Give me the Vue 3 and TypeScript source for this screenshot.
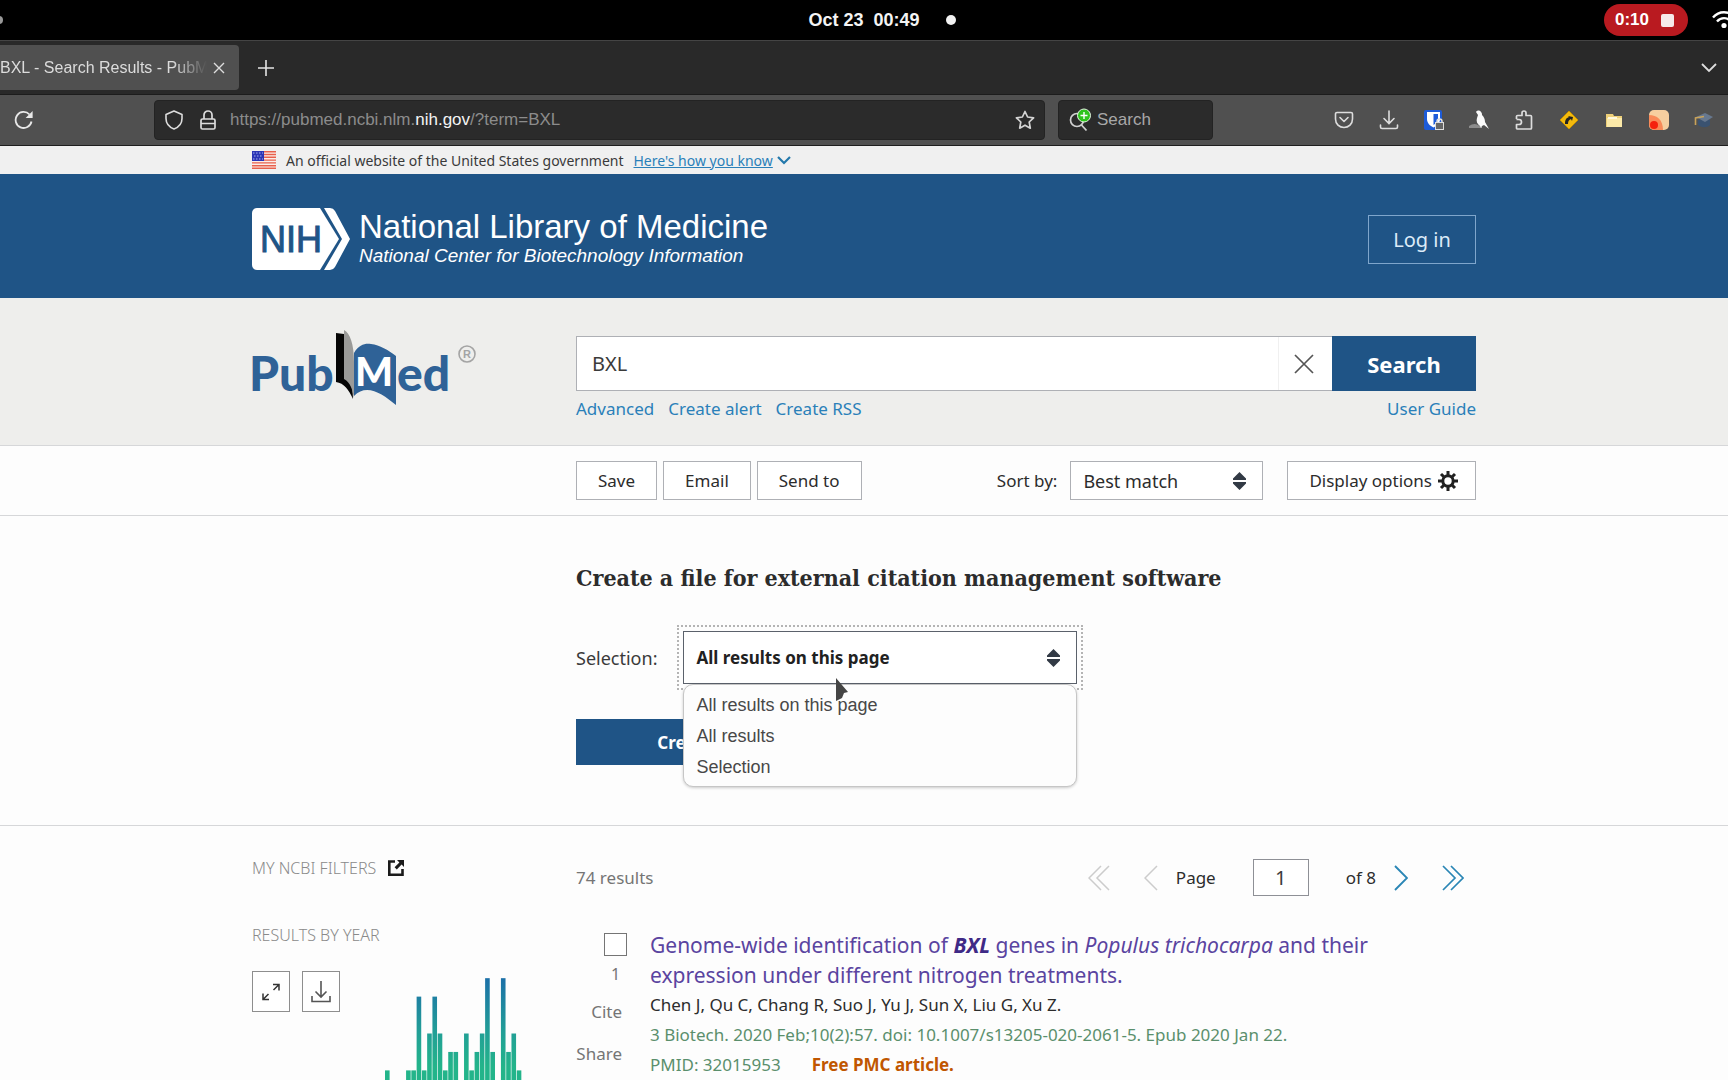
<script setup lang="ts">
import { ref } from 'vue'

const selection = ref('All results on this page')
const choices: string[] = ['All results on this page', 'All results', 'Selection']
const sortBy = ref('Best match')
const term = ref('BXL')
const pageNumber = ref('1')

// Number of results for each year, oldest first
const years: number[] = [1, 0, 0, 0, 1, 1, 5, 1, 3, 5, 3, 1, 2, 2, 0, 3, 1, 2, 3, 6, 2, 0, 6, 2, 3, 1]
const unit = 56
const pitch = 16
const chartHeight = 6 * unit
</script>

<template>
  <div class="screen">
    <header class="system">
      <span class="workspace"></span>
      <div class="clock">
        <time>Oct 23&nbsp; 00:49</time>
        <span class="notice"></span>
      </div>
      <div class="tray">
        <button class="recording" type="button" aria-label="Stop recording">0:10<span class="stop"></span></button>
        <svg class="wifi" viewBox="0 0 24 18" width="24" height="18" fill="none" stroke="#fff" stroke-width="2.4">
          <path d="M1 6.5C7-.5 17-.5 23 6.5M5 10.500c4-4.500 10-4.500 14 0" />
          <circle cx="12" cy="14.500" r="2.600" fill="#fff" stroke="none" />
        </svg>
      </div>
    </header>

    <div class="tabs">
      <div class="tab">
        <span class="tab-title">BXL - Search Results - PubMed</span>
        <button class="plain" type="button" aria-label="Close tab">
          <svg viewBox="0 0 12 12" width="12" height="12" fill="none" stroke="#ddd" stroke-width="1.400"><path d="M1 1l10 10M11 1L1 11" /></svg>
        </button>
      </div>
      <button class="plain new-tab" type="button" aria-label="New tab">
        <svg viewBox="0 0 16 16" width="16" height="16" fill="none" stroke="#e4e4e4" stroke-width="1.600"><path d="M8 0v16M0 8h16" /></svg>
      </button>
      <button class="plain all-tabs" type="button" aria-label="List all tabs">
        <svg viewBox="0 0 16 10" width="16" height="10" fill="none" stroke="#ddd" stroke-width="1.800"><path d="M1 1l7 7 7-7" /></svg>
      </button>
    </div>

    <div class="toolbar">
      <button class="plain reload" type="button" aria-label="Reload">
        <svg viewBox="0 0 20 20" width="20" height="20" fill="none" stroke="#e8e8e8" stroke-width="1.800">
          <path d="M17.500 11.500A8 8 0 1 1 15.500 4.500" />
          <path d="M18.600 1v7h-7z" fill="#e8e8e8" stroke="none" />
        </svg>
      </button>
      <div class="address">
        <svg viewBox="0 0 20 20" width="20" height="20" fill="none" stroke="#ddd" stroke-width="1.600" stroke-linejoin="round">
          <path d="M10 1l8 3.500v4c0 5-3.200 8.600-8 10.500-4.800-1.900-8-5.500-8-10.500v-4z" />
        </svg>
        <svg class="lock" viewBox="0 0 16 20" width="16" height="20" fill="none" stroke="#ddd" stroke-width="1.700">
          <rect x="1" y="9" width="14" height="10" rx="1.500" />
          <path d="M4 9V5a4 4 0 0 1 8 0v4M1 13.500h14" />
        </svg>
        <a class="url" href="#">https://pubmed.ncbi.nlm.<b>nih.gov</b>/?term=BXL</a>
        <svg viewBox="0 0 20 20" width="20" height="20" fill="none" stroke="#d4d4d4" stroke-width="1.700" stroke-linejoin="round">
          <path d="M10 1.500l2.600 5.500 6 .800-4.400 4.200 1.100 6.200L10 15.200l-5.300 3 1.100-6.200L1.400 7.800l6-.800z" />
        </svg>
      </div>
      <label class="quick">
        <svg viewBox="0 0 22 24" width="22" height="24" fill="none">
          <circle cx="8" cy="12" r="6.500" stroke="#d0d0d0" stroke-width="1.700" />
          <path d="M12.500 17l5 5.500" stroke="#d0d0d0" stroke-width="1.800" />
          <circle cx="15" cy="7.500" r="6.500" fill="#2ec41c" stroke="#e6f5e4" />
          <path d="M15 4v7M11.500 7.500h7" stroke="#fff" stroke-width="1.400" />
        </svg>
        <input type="text" placeholder="Search" aria-label="Search the web" />
      </label>
      <div class="extensions">
        <button class="plain" type="button" aria-label="Pocket">
          <svg viewBox="0 0 20 20" width="20" height="20" fill="none" stroke="#ddd" stroke-width="1.600" stroke-linejoin="round" stroke-linecap="round">
            <path d="M3 2.500h14a1.500 1.500 0 0 1 1.500 1.500v5c0 5-3.800 8.500-8.500 8.500S1.500 14 1.500 9V4A1.500 1.500 0 0 1 3 2.500z" /><path d="M6 7.500l4 4 4-4" />
          </svg>
        </button>
        <button class="plain" type="button" aria-label="Downloads">
          <svg viewBox="0 0 20 20" width="20" height="20" fill="none" stroke="#ddd" stroke-width="1.600" stroke-linecap="round">
            <path d="M10 1v12M5 8.500l5 5 5-5M1.500 15v2a1.500 1.500 0 0 0 1.500 1.500h14a1.500 1.500 0 0 0 1.500-1.500v-2" />
          </svg>
        </button>
        <button class="plain" type="button" aria-label="Password vault">
          <svg viewBox="0 0 20 20" width="20" height="20">
            <rect width="18" height="20" rx="2" fill="#1d5bd8" />
            <path d="M3 2h13v7c0 4-3 7-6.500 8.500C6 16 3 13 3 9z" fill="#fff" />
            <path d="M9.500 4H14v5c0 2.500-2 4.500-4.500 6z" fill="#1d5bd8" />
            <path d="M11 12h9v8h-9z" fill="#ddd" /><path d="M12 13h7v6h-7z" fill="#666" />
            <path d="M13 12.500v-1a2.500 2.500 0 0 1 5 0v1" fill="none" stroke="#ddd" stroke-width="1.500" />
          </svg>
        </button>
        <button class="plain" type="button" aria-label="Bird">
          <svg viewBox="0 0 20 20" width="20" height="20">
            <path d="M0 16c3-2 6-3 9-1l4 2v1H0z" fill="#8c8c8c" />
            <path d="M7 2c1-2 4-2 5 0 1 1 1 2 1 3 2 2 3 4 3 7l4 7-5-4-2 1-1 2-1-2c-3-2-4-5-3-8l1-3z" fill="#fafafa" />
          </svg>
        </button>
        <button class="plain" type="button" aria-label="Extensions">
          <svg viewBox="0 0 20 20" width="20" height="20" fill="none" stroke="#ddd" stroke-width="1.700" stroke-linejoin="round">
            <path d="M2.500 9V6.500a1 1 0 0 1 1-1H8V3a2 2 0 0 1 4 0v2.500h4.500a1 1 0 0 1 1 1V18a1 1 0 0 1-1 1h-13a1 1 0 0 1-1-1v-3.500H5a2.300 2.300 0 0 0 0-5H2.500" />
          </svg>
        </button>
        <button class="plain" type="button" aria-label="Redirector">
          <svg viewBox="0 0 20 20" width="20" height="20">
            <path d="M10 1l9 9-9 9-9-9z" fill="#f2b90d" stroke="#c79100" stroke-linejoin="round" />
            <path d="M6 14c0-4 1-6 4-7l-1-1 5 1-1 4-1-2c-2 1-3 2-3 5z" fill="#222" />
          </svg>
        </button>
        <button class="plain" type="button" aria-label="Folder">
          <svg viewBox="0 0 20 20" width="20" height="20">
            <path d="M2 4h7l1 2h8v11H2z" fill="#edcf78" /><path d="M3 8h15v9H3z" fill="#fbe9a8" /><path d="M4 7h9v2H4z" fill="#fff8dc" />
          </svg>
        </button>
        <button class="plain" type="button" aria-label="Colour layers">
          <svg viewBox="0 0 20 20" width="20" height="20">
            <rect width="20" height="20" rx="5" fill="#f7cf9f" />
            <path d="M0 5c8 0 14 5 14 15H5a5 5 0 0 1-5-5z" fill="#f98a58" />
            <circle cx="5" cy="15" r="4" fill="#f5210d" />
          </svg>
        </button>
        <button class="plain" type="button" aria-label="Scholar">
          <svg viewBox="0 0 20 20" width="20" height="20">
            <path d="M4 10v5c4 3 9 3 12 0v-5z" fill="#3a5270" /><path d="M2 7l9-4 8 4-8 5z" fill="#67788f" /><path d="M10 6.500L1.500 8v7" fill="none" stroke="#c9a35a" stroke-width="1.600" />
          </svg>
        </button>
      </div>
    </div>

    <main class="page">
      <div class="official">
        <div class="wrap official-row">
          <svg viewBox="0 0 24 18" width="24" height="18">
            <path fill="#fbeeea" d="M0 0h24v18H0z" />
            <path stroke="#e8604c" stroke-width="1.400" d="M0 .7h24M0 3.500h24M0 6.300h24M0 9.100h24M0 11.900h24M0 14.700h24M0 17.300h24" />
            <path fill="#2b35b5" d="M0 0h12v10H0z" />
            <path stroke="#aab4ee" stroke-width="1.200" stroke-dasharray="1.500 1.500" d="M1 2h10M2 5h9M1 8h10" />
          </svg>
          <span>An official website of the United States government</span>
          <a class="know" href="#">Here's how you know
            <svg viewBox="0 0 14 9" width="14" height="9" fill="none" stroke="#2378ab" stroke-width="2.200"><path d="M1 1l6 6 6-6" /></svg></a>
        </div>
      </div>

      <div class="masthead">
        <div class="wrap masthead-row">
          <a class="nlm" href="#">
            <svg viewBox="0 0 98 62" width="98" height="62">
              <path fill="#fff" d="M5 0h63l19 31-19 31H5a5 5 0 0 1-5-5V5a5 5 0 0 1 5-5z" />
              <path fill="#fff" d="M72 0h6a6 6 0 0 1 5 3l15 28-15 28a6 6 0 0 1-5 3h-6l18-31z" />
              <text x="8" y="44" class="nih">NIH</text>
            </svg>
            <span class="nlm-names">
              <span class="nlm-title">National Library of Medicine</span>
              <em>National Center for Biotechnology Information</em>
            </span>
          </a>
          <button class="login" type="button">Log in</button>
        </div>
      </div>

      <form class="search-band" @submit.prevent>
        <div class="wrap columns">
          <a class="side" href="#" aria-label="PubMed">
            <svg class="pubmed" viewBox="-4 0 234 80" width="234" height="80">
              <text x="-3" y="61" class="word">Pub</text>
              <path fill="#050505" d="M84 3l8 1 8 46 1 19c-4-9-9-16-17-17z" />
              <path fill="#9a9a98" d="M92 0c6 3 10 14 10 32v36c-2-9-3-15-10-19z" />
              <path fill="#2f6297" d="M102 23c5-9 12-10 17-9 9 1 17 6 25 12v49c-14-12-30-22-42-9z" />
              <text x="103" y="56" class="initial">M</text>
              <text x="145" y="61" class="word">ed</text>
              <circle cx="215" cy="24" r="8" fill="none" stroke="#a4a4a4" stroke-width="1.600" />
              <text x="215" y="28" text-anchor="middle" class="reg">R</text>
            </svg>
          </a>
          <div class="content">
            <div class="search-row">
              <div class="field">
                <input v-model="term" class="term" type="text" aria-label="Search term" />
                <button class="plain clear" type="button" aria-label="Clear search">
                  <svg viewBox="0 0 20 20" width="20" height="20" fill="none" stroke="#555" stroke-width="1.700"><path d="M1 1l18 18M19 1L1 19" /></svg>
                </button>
              </div>
              <button class="go" type="submit">Search</button>
            </div>
            <nav class="links">
              <a href="#">Advanced</a><a href="#">Create alert</a><a href="#">Create RSS</a><a class="guide" href="#">User Guide</a>
            </nav>
          </div>
        </div>
      </form>

      <div class="actions">
        <div class="wrap columns">
          <div class="side"></div>
          <div class="content actions-row">
            <button class="box" type="button">Save</button>
            <button class="box" type="button">Email</button>
            <button class="box" type="button">Send to</button>
            <label class="sort-label" for="sort">Sort by:</label>
            <span class="picker sort">
              <select id="sort" v-model="sortBy"><option>Best match</option></select>
              <svg viewBox="0 0 13 18" width="13" height="18" fill="#323a45"><path d="M6.500 0L13 6.500V8H0V6.500zM0 10h13v1.500L6.500 18 0 11.500z" /></svg>
            </span>
            <button class="box display" type="button">Display options
              <svg viewBox="0 0 20 20" width="20" height="20" fill="none" stroke="#212121">
                <circle cx="10" cy="10" r="5.200" stroke-width="3" />
                <path stroke-width="3" d="M10 0v4M10 16v4M0 10h4M16 10h4M3 3l2.800 2.800M14.200 14.200L17 17M3 17l2.800-2.800M14.200 5.800L17 3" />
              </svg>
            </button>
          </div>
        </div>
      </div>

      <form class="export" @submit.prevent>
        <div class="wrap columns">
          <div class="side"></div>
          <div class="content">
            <h2>Create a file for external citation management software</h2>
            <div class="choose">
              <label for="selection">Selection:</label>
              <span class="picker chosen">
                <select id="selection" v-model="selection">
                  <option v-for="c in choices" :key="c">{{ c }}</option>
                </select>
                <svg viewBox="0 0 13 18" width="13" height="18" fill="#323a45"><path d="M6.500 0L13 6.500V8H0V6.500zM0 10h13v1.500L6.500 18 0 11.500z" /></svg>
                <ul class="menu" role="listbox">
                  <li v-for="c in choices" :key="c" role="option">{{ c }}</li>
                </ul>
                <svg class="pointer" viewBox="0 0 14 25" width="14" height="25"><path fill="#454545" d="M1 0l12 14-4 1-2 5-6 3z" /></svg>
              </span>
            </div>
            <button class="create" type="submit">Create file</button>
          </div>
        </div>
      </form>

      <section class="wrap columns results">
        <aside class="side">
          <h3>MY NCBI FILTERS
            <svg viewBox="0 0 16 16" width="16" height="16" fill="none" stroke="#1b1b1b"><path stroke-width="2.600" d="M7 1.500H1.300v13.200h13.200V9" /><path d="M9 0h7v7l-2.400-2.400-4.800 4.800-2.200-2.200 4.800-4.800z" fill="#1b1b1b" stroke="none" /></svg>
          </h3>
          <h3 class="by-year">RESULTS BY YEAR</h3>
          <div class="timeline">
            <button class="tool" type="button" aria-label="Expand chart">
              <svg viewBox="0 0 18 18" width="18" height="18" fill="none" stroke="#333" stroke-width="1.500"><path d="M11 1.500h6v6M17 1.500l-5.500 5.500M1 10.500v6h6M1 16.500l5.500-5.500" /></svg>
            </button>
            <button class="tool" type="button" aria-label="Download chart">
              <svg viewBox="0 0 20 22" width="20" height="22" fill="none" stroke="#555" stroke-width="1.600"><path d="M10 0v16M4.500 10.500L10 16l5.500-5.500M1 15v5.500h18V15" /></svg>
            </button>
            <svg class="chart" :viewBox="`0 0 ${years.length * pitch} ${chartHeight}`" width="137" height="111">
              <defs>
                <linearGradient id="depth" gradientUnits="userSpaceOnUse" x1="0" y1="0" x2="0" :y2="chartHeight">
                  <stop offset="0" stop-color="#1c70a8" /><stop offset="0.500" stop-color="#22a096" /><stop offset="0.800" stop-color="#23b48a" />
                </linearGradient>
              </defs>
              <rect v-for="(n, i) in years" :key="i" :x="i * pitch" :y="chartHeight - n * unit" width="14" :height="n * unit" fill="url(#depth)" />
            </svg>
          </div>
        </aside>

        <div class="content">
          <div class="pager">
            <span class="count">74 results</span>
            <button class="plain first" type="button" aria-label="First page"><svg viewBox="0 0 22 26" width="22" height="26" fill="none" stroke="#ccc" stroke-width="1.500"><path d="M13 1L1 13l12 12M21 1L9 13l12 12" /></svg></button>
            <button class="plain previous" type="button" aria-label="Previous page"><svg viewBox="0 0 14 26" width="14" height="26" fill="none" stroke="#ccc" stroke-width="1.500"><path d="M13 1L1 13l12 12" /></svg></button>
            <label for="page">Page</label>
            <input id="page" v-model="pageNumber" class="page-number" type="text" />
            <span class="total">of 8</span>
            <button class="plain next" type="button" aria-label="Next page"><svg viewBox="0 0 14 26" width="14" height="26" fill="none" stroke="#2a86b5" stroke-width="1.900"><path d="M1 1l12 12L1 25" /></svg></button>
            <button class="plain last" type="button" aria-label="Last page"><svg viewBox="0 0 22 26" width="22" height="26" fill="none" stroke="#2a86b5" stroke-width="1.700"><path d="M1 1l12 12L1 25M9 1l12 12L9 25" /></svg></button>
          </div>
          <article class="hit">
            <div class="tools">
              <label class="pick"><input type="checkbox" /><span>1</span></label>
              <button class="plain tool-link" type="button">Cite</button>
              <button class="plain tool-link" type="button">Share</button>
            </div>
            <div class="record">
              <a class="title" href="#">Genome-wide identification of <b><i>BXL</i></b> genes in <i>Populus trichocarpa</i> and their expression under different nitrogen treatments.</a>
              <p>Chen J, Qu C, Chang R, Suo J, Yu J, Sun X, Liu G, Xu Z.</p>
              <p class="journal">3 Biotech. 2020 Feb;10(2):57. doi: 10.1007/s13205-020-2061-5. Epub 2020 Jan 22.</p>
              <p class="journal">PMID: 32015953<strong>Free PMC article.</strong></p>
            </div>
          </article>
        </div>
      </section>
    </main>
  </div>
</template>

<style>
body {
  background: #fdfdfd;
}
</style>

<style scoped>
.screen {
  height: 100vh;
  overflow: hidden;
  display: flex;
  flex-direction: column;
  font-family: "Liberation Sans", Arial, sans-serif;
  font-size: 17px;
  color: #2c2c2c;
}
.screen * { box-sizing: border-box; }
svg { flex: none; display: block; }
button, input, select { font: inherit; color: inherit; margin: 0; border-radius: 0; }
button { cursor: pointer; white-space: nowrap; }
a { text-decoration: none; color: #2a80b9; }
.plain { border: 0; padding: 0; background: none; display: flex; align-items: center; justify-content: center; }

/* Desktop bar */
.system {
  flex: none;
  height: 40px;
  background: #000;
  color: #f4f4f4;
  display: grid;
  grid-template-columns: 1fr auto 1fr;
  align-items: center;
  font-weight: 700;
}
.workspace { width: 8px; height: 8px; margin-left: -5px; border-radius: 50%; background: #999; }
.clock { position: relative; font-size: 18px; }
.notice { position: absolute; right: -36px; top: 5px; width: 10px; height: 10px; border-radius: 50%; background: #f2f2f2; }
.tray { display: flex; justify-content: flex-end; align-items: center; gap: 24px; margin-right: -8px; }
.recording {
  display: flex;
  align-items: center;
  gap: 12px;
  height: 32px;
  padding: 0 14px 0 11px;
  border: 0;
  border-radius: 16px;
  background: #b91a20;
  color: #fff;
}
.stop { width: 13px; height: 13px; border-radius: 2px; background: #f6eaea; }

/* Browser */
.tabs {
  flex: none;
  height: 55px;
  padding-right: 11px;
  display: flex;
  align-items: center;
  background: #292929;
  border-top: 1px solid #444;
  border-bottom: 1px solid #1c1c1c;
}
.tab {
  width: 239px;
  height: 45px;
  padding-right: 14px;
  display: flex;
  align-items: center;
  background: #505050;
  color: #dcdcdc;
  border-radius: 0 4px 4px 0;
  font-size: 16px;
}
.tab-title {
  flex: 1;
  margin-right: 6px;
  overflow: hidden;
  white-space: nowrap;
  mask-image: linear-gradient(to left, transparent, #000 34px);
}
.new-tab { margin-left: 19px; }
.all-tabs { margin-left: auto; }
.toolbar {
  flex: none;
  height: 51px;
  padding: 0 2px 0 14px;
  display: flex;
  align-items: center;
  background: #505050;
  border-bottom: 1px solid #1e1e1e;
}
.reload { margin-right: 120px; }
.address, .quick {
  height: 40px;
  display: flex;
  align-items: center;
  background: #2b2b2b;
  border: 1px solid #232323;
  border-radius: 4px;
}
.address { flex: 1; padding: 0 9px; }
.lock { margin: 0 14px 0 16px; }
.url { flex: 1; color: #8c8c8c; }
.url b { font-weight: 400; color: #f4f4f4; }
.quick { width: 155px; margin: 0 108px 0 13px; padding: 0 10px; gap: 6px; }
.quick input { width: 100px; min-width: 0; padding: 0; border: 0; background: none; outline: 0; }
.quick input::placeholder { color: #a8a8a8; opacity: 1; }
.extensions { display: flex; }
.extensions button { width: 45px; height: 40px; }

/* Page */
.page {
  flex: 1;
  min-height: 0;
  overflow: hidden;
  background: #fdfdfd;
  font-family: "Noto Sans", "Open Sans", sans-serif;
}
.wrap { width: 1224px; max-width: 100%; margin: 0 auto; }
.columns { display: flex; }
.side { flex: none; width: 324px; }
.content { flex: 1; min-width: 0; }

.official { background: #f0f0f0; font-size: 14px; color: #3a3a3a; }
.official-row { display: flex; align-items: center; height: 28px; }
.official-row > span { margin: 0 10px; }
.know { display: flex; align-items: center; text-decoration: underline; gap: 4px; }

.masthead { background: #1f5486; }
.masthead-row { display: flex; align-items: center; justify-content: space-between; height: 124px; padding-top: 6px; }
.nlm { display: flex; align-items: center; gap: 9px; color: #fff; font-family: "Liberation Sans", Arial, sans-serif; }
.nih { font: 400 36px "Liberation Sans", Arial, sans-serif; fill: #1f5486; stroke: #1f5486; }
.nlm-names { display: flex; flex-direction: column; font-size: 19px; line-height: 24px; }
.nlm-title { font-size: 33px; line-height: 34px; }
.login { width: 108px; height: 49px; background: none; border: 1px solid #7fa6cc; color: #dcebf8; font-size: 20px; }

.search-band { background: #eeeeec; border-bottom: 1px solid #d6d7d9; height: 148px; padding-top: 32px; }
.pubmed { margin-left: -4px; }
.word { font: 900 48px Lato, sans-serif; fill: #2f6297; }
.initial { font: 900 40px Lato, sans-serif; fill: #fff; }
.reg { font: 700 11px "Liberation Sans", Arial, sans-serif; fill: #a4a4a4; }
.search-row { display: flex; height: 55px; margin-top: 6px; }
.field { flex: 1; display: flex; background: #fff; border: 1px solid #aeb0b5; border-right: 0; }
.term { flex: 1; min-width: 0; border: 0; background: none; outline: 0; padding: 0 15px; font-size: 20px; color: #3a3a3a; }
.clear { width: 54px; padding-right: 4px; border-left: 1px solid #f0f0f0; }
.go { width: 144px; border: 0; background: #1f5486; color: #fff; font-size: 22px; font-weight: 700; }
.links { display: flex; gap: 14px; margin-top: 6px; line-height: 24px; }
.guide { margin-left: auto; }

.actions { border-bottom: 1px solid #d6d7d9; padding: 15px 0; }
.actions-row { display: flex; align-items: center; gap: 6px; }
.box { height: 39px; padding: 0 21px; background: #fff; border: 1px solid #aeb0b5; }
.sort-label { margin-left: auto; margin-right: 7px; }
.picker { position: relative; display: flex; align-items: center; }
.picker select { appearance: none; width: 100%; height: 100%; background: #fff; border: 1px solid #aeb0b5; padding: 0 12px; outline: 0; }
.picker > svg:not(.pointer) { position: absolute; right: 17px; pointer-events: none; }
.sort { width: 193px; height: 39px; margin-right: 18px; font-size: 18px; }
.display { display: flex; align-items: center; gap: 6px; padding: 0 17px 0 21px; }

.export { height: 310px; padding-top: 46px; border-bottom: 1px solid #d6d7d9; }
h2 { margin: 0; font: 700 23px/32px "DejaVu Serif Condensed", "DejaVu Serif", serif; }
.choose { display: flex; align-items: center; gap: 26px; margin-top: 37px; font-size: 18px; color: #3a3a3a; }
.chosen { width: 394px; height: 53px; font-size: 17px; color: #212121; }
.chosen select { border-color: #5b616b; font-weight: 700; outline: 2px dotted #b4b4b4; outline-offset: 4px; }
.menu {
  position: absolute;
  z-index: 1;
  top: 53px;
  left: 0;
  right: 0;
  margin: 0;
  padding: 5px 0 3px;
  list-style: none;
  background: #fdfdfd;
  border: 1px solid #c6c6c6;
  border-radius: 10px;
  box-shadow: 0 1px 3px #0003;
  font: 18px/31px "Liberation Sans", Arial, sans-serif;
  color: #484848;
}
.menu li { padding: 0 12px; }
.pointer { position: absolute; z-index: 2; left: 152px; top: 47px; }
.create { width: 250px; height: 46px; margin-top: 35px; border: 0; background: #1f5486; color: #fff; font-weight: 700; }

.results { padding-top: 30px; }
h3 { margin: 0; display: flex; align-items: center; gap: 12px; font-size: 16px; line-height: 24px; font-weight: 300; color: #8a8a8a; }
.by-year { margin-top: 43px; }
.timeline { display: flex; align-items: flex-start; margin-top: 24px; }
.tool { width: 38px; height: 41px; margin-right: 12px; padding: 0; display: flex; align-items: center; justify-content: center; background: #fff; border: 1px solid #8e8e8e; }
.chart { margin: 7px 0 0 33px; }

.pager { display: flex; align-items: center; height: 37px; margin-top: 3px; padding-right: 12px; }
.count { margin-right: auto; color: #757575; }
.previous { margin: 0 18px 0 34px; }
.page-number { width: 56px; height: 37px; margin: 0 37px; padding: 0; border: 1px solid #8e9096; background: #fff; text-align: center; font-size: 20px; color: #3a3a3a; }
.next { margin: 0 34px 0 18px; }

.hit { display: flex; margin-top: 34px; }
.tools { width: 46px; margin-right: 28px; display: flex; flex-direction: column; align-items: flex-end; color: #757575; }
.pick { width: 23px; display: flex; flex-direction: column; align-items: center; gap: 6px; margin: 3px -5px 13px 0; font-size: 16px; line-height: 24px; }
.pick input { appearance: none; width: 23px; height: 23px; border: 1px solid #757575; background: #fff; }
.tool-link { height: 24px; margin-bottom: 18px; }
.record { flex: 1; line-height: 30px; padding-right: 70px; }
.title { display: block; font-size: 21px; color: #5a44a0; }
.title b { color: #3f2a86; }
p { margin: 0; }
.journal { color: #5a8f6c; }
.journal strong { margin-left: 31px; color: #c05600; }
</style>
